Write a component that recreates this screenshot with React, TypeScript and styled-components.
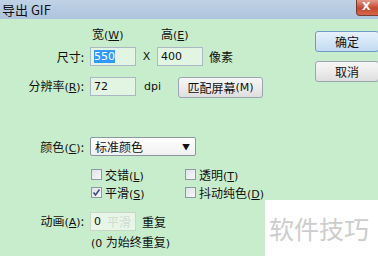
import styled, { createGlobalStyle } from 'styled-components'

const Global = createGlobalStyle`
  html, body {
    margin: 0;
    padding: 0;
  }
  body {
    width: 378px;
    height: 256px;
    overflow: hidden;
    background: #c7edcc;
    font-family: 'Noto Sans CJK SC', 'DejaVu Sans', sans-serif;
    font-size: 12px;
    color: #111;
  }
`
const Window = styled.div`
  position: relative;
  width: 378px;
  height: 256px;
  overflow: hidden;
  background: #c7edcc;
`
const TitleBar = styled.div`
  height: 19px;
  display: flex;
  align-items: center;
  justify-content: space-between;
  background: linear-gradient(#c0d3e6, #adc4dc);
  padding-left: 2px;
  font-size: 13px;
  line-height: 19px;
`
const CloseBtn = styled.div`
  align-self: flex-start;
  width: 20px;
  height: 15px;
  margin-right: -5px;
  border: 1px solid #7a3a2e;
  border-top: none;
  border-radius: 0 0 0 4px;
  background: linear-gradient(#e09a86, #c4462e 55%, #d46a4a);
  color: #fff;
  font: bold 11px 'DejaVu Sans', sans-serif;
  line-height: 14px;
  padding-left: 5px;
`
const Body = styled.div`
  display: flex;
  justify-content: space-between;
`
const Form = styled.div`
  display: grid;
  grid-template-columns: 84px auto;
  column-gap: 6px;
  align-items: center;
  padding-top: 7px;
`
const Label = styled.div<{ $mt?: number }>`
  text-align: right;
  white-space: nowrap;
  height: 18px;
  line-height: 18px;
  margin-top: ${p => p.$mt ?? 0}px;
`
const Row = styled.div<{ $h?: number; $mt?: number }>`
  display: flex;
  align-items: center;
  height: ${p => p.$h ?? 18}px;
  margin-top: ${p => p.$mt ?? 0}px;
  white-space: nowrap;
`
const U = styled.span`
  font-family: 'DejaVu Sans', sans-serif;
  font-size: 11px;
  text-decoration: underline;
`
const Key = styled.span`
  font-family: 'DejaVu Sans', sans-serif;
  font-size: 11px;
`
const Head = styled.span<{ $w: number }>`
  display: inline-block;
  width: ${p => p.$w}px;
  padding-left: 2px;
`
const Field = styled.div<{ $dim?: boolean }>`
  box-sizing: border-box;
  width: 46px;
  height: 19px;
  border: 1px solid ${p => (p.$dim ? '#c9d6c9' : '#aab8c4')};
  background: ${p => (p.$dim ? '#e8f6e8' : '#e2f5e2')};
  font-family: 'DejaVu Sans', sans-serif;
  font-size: 11px;
  line-height: 17px;
  padding-left: 3px;
  display: flex;
  align-items: center;
`
const Sel = styled.span`
  background: #3399ff;
  color: #fff;
  line-height: 13px;
`
const Ghost = styled.span`
  color: #cfdccf;
  font-family: 'Noto Sans CJK SC', sans-serif;
  font-size: 12px;
  margin-left: 6px;
`
const Small = styled.span<{ $w?: number }>`
  display: inline-block;
  width: ${p => p.$w ?? 0}px;
  text-align: center;
  font-family: 'DejaVu Sans', sans-serif;
  font-size: 11px;
`
const Unit = styled.span`
  margin-left: 6px;
`
const Button = styled.div<{ $primary?: boolean; $w: number }>`
  box-sizing: border-box;
  width: ${p => p.$w}px;
  height: 21px;
  border: 1px solid ${p => (p.$primary ? '#6f9cc6' : '#9aa6b0')};
  border-radius: 3px;
  background: ${p =>
    p.$primary
      ? 'linear-gradient(#e6f1fb, #d4e6f6 50%, #c2daf0)'
      : 'linear-gradient(#f6f6f6, #ececec 50%, #dedede)'};
  display: flex;
  align-items: center;
  justify-content: center;
  line-height: 19px;
  white-space: nowrap;
`
const MatchBtn = styled(Button)`
  margin-left: 9px;
  margin-top: 2px;
`
const Side = styled.div`
  display: flex;
  flex-direction: column;
  gap: 9px;
  padding-top: 12px;
  margin-right: -1px;
`
const Select = styled.div`
  box-sizing: border-box;
  width: 106px;
  height: 19px;
  border: 1px solid #8a96a2;
  border-radius: 2px;
  background: linear-gradient(#ffffff, #f0f0f0);
  display: flex;
  align-items: center;
  justify-content: space-between;
  padding: 0 5px 0 4px;
  font-size: 12px;
`
const Arrow = styled.span`
  font-size: 8px;
  color: #111;
`
const Checks = styled.div`
  display: grid;
  grid-template-columns: 94px auto;
  row-gap: 0px;
  padding-left: 1px;
  margin-top: 9px;
`
const Check = styled.div`
  display: flex;
  align-items: center;
  gap: 3px;
  height: 18px;
  white-space: nowrap;
`
const Box = styled.span`
  box-sizing: border-box;
  width: 11px;
  height: 11px;
  border: 1px solid #8d9aa6;
  background: linear-gradient(135deg, #dfe3e8, #f6f7f8);
  display: flex;
  align-items: center;
  justify-content: center;
`
const Note = styled.div`
  grid-column: 2;
  height: 18px;
  line-height: 18px;
  padding-left: 1px;
  margin-top: 2px;
`
const Mark = styled.div`
  position: absolute;
  left: 265px;
  top: 200px;
  width: 113px;
  height: 56px;
  background: #fff;
  color: #cdcdcd;
  font-size: 25px;
  line-height: 56px;
  padding-left: 4px;
  box-sizing: border-box;
  white-space: nowrap;
`

function Tick() {
  return (
    <svg width='9' height='9' viewBox='0 0 9 9'>
      <path d='M1.5 4.5 L3.5 7 L7.5 1.5' fill='none' stroke='#3a4e86' strokeWidth='1.6' />
    </svg>
  )
}

const CheckItem = ({ text, k, checked }: { text: string; k: string; checked?: boolean }) => (
  <Check>
    <Box>{checked && <Tick />}</Box>
    <span>
      {text}
      <Key>
        (<U>{k}</U>)
      </Key>
    </span>
  </Check>
)

export default function App() {
  return (
    <Window>
      <Global />
      <TitleBar>
        <span>导出 GIF</span>
        <CloseBtn>X</CloseBtn>
      </TitleBar>
      <Body>
        <Form>
          <div />
          <Row $h={14}>
            <Head $w={67}>
              宽<Key>(<U>W</U>)</Key>
            </Head>
            <Head $w={40}>
              高<Key>(<U>E</U>)</Key>
            </Head>
          </Row>
          <Label $mt={7}>尺寸:</Label>
          <Row $h={19} $mt={7}>
            <Field>
              <Sel>550</Sel>
            </Field>
            <Small $w={21}>X</Small>
            <Field>400</Field>
            <Unit>像素</Unit>
          </Row>
          <Label $mt={10}>
            分辨率<Key>(<U>R</U>)</Key>:
          </Label>
          <Row $h={20} $mt={10}>
            <Field>72</Field>
            <Small $w={33}>dpi</Small>
            <MatchBtn $w={85}>
              匹配屏幕<Key>(M)</Key>
            </MatchBtn>
          </Row>
          <Label $mt={41}>
            颜色<Key>(<U>C</U>)</Key>:
          </Label>
          <Row $h={19} $mt={41}>
            <Select>
              <span>标准颜色</span>
              <Arrow>▼</Arrow>
            </Select>
          </Row>
          <div />
          <Checks>
            <CheckItem text='交错' k='L' />
            <CheckItem text='透明' k='T' />
            <CheckItem text='平滑' k='S' checked />
            <CheckItem text='抖动纯色' k='D' />
          </Checks>
          <Label $mt={10}>
            动画<Key>(<U>A</U>)</Key>:
          </Label>
          <Row $h={20} $mt={10}>
            <Field $dim>
              0<Ghost>平滑</Ghost>
            </Field>
            <Unit>重复</Unit>
          </Row>
          <Note>
            <Key>(0 </Key>为始终重复<Key>)</Key>
          </Note>
        </Form>
        <Side>
          <Button $primary $w={64}>
            确定
          </Button>
          <Button $w={64}>取消</Button>
        </Side>
      </Body>
      <Mark>软件技巧</Mark>
    </Window>
  )
}
